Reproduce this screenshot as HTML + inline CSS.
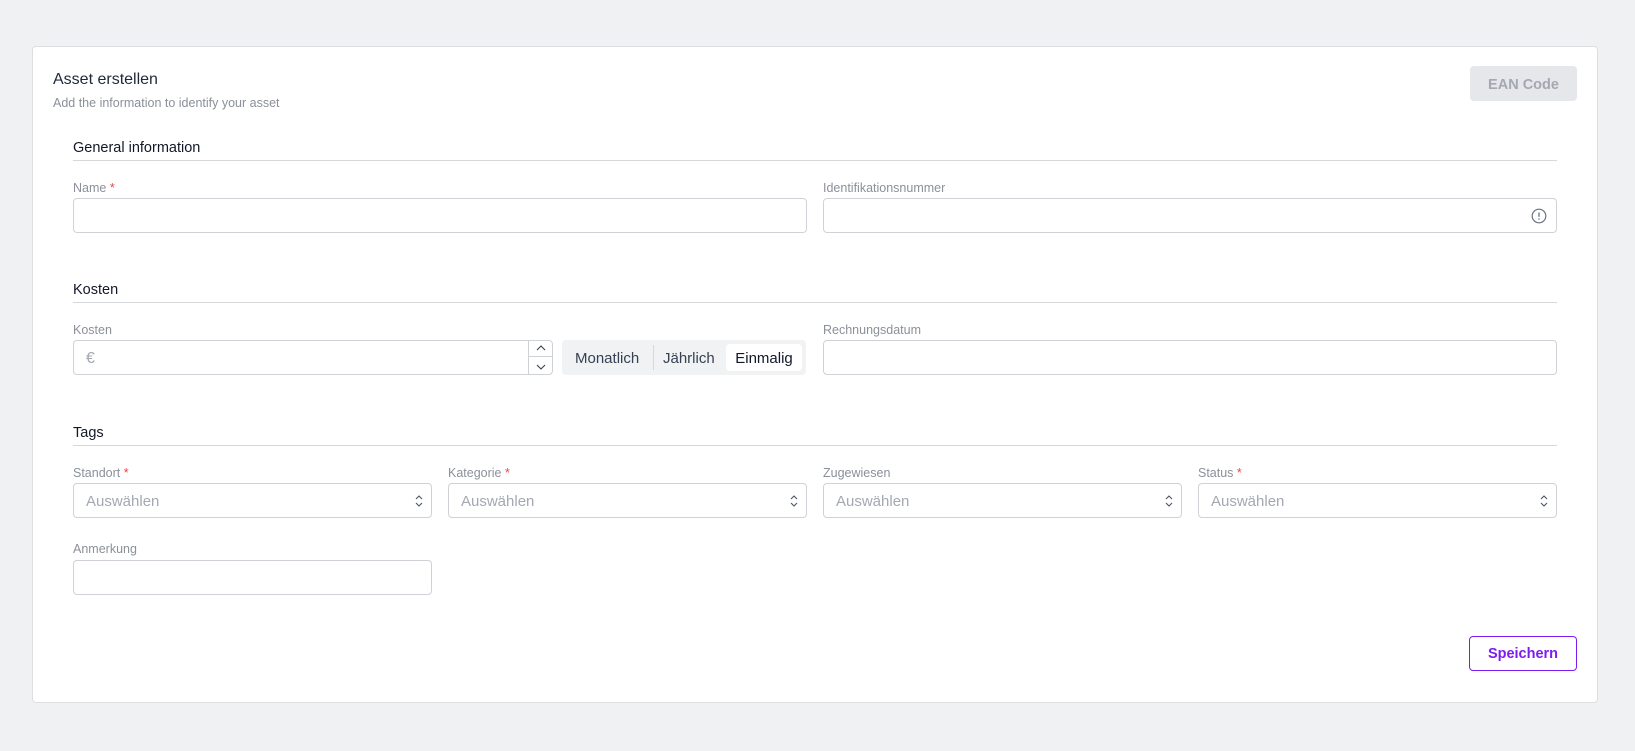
<!DOCTYPE html>
<html><head><meta charset="utf-8"><style>
*{box-sizing:border-box;margin:0;padding:0}
body{width:1635px;height:751px;background:#f0f1f3;font-family:"Liberation Sans",Arial,sans-serif;position:relative;overflow:hidden;color:#111827}
.card{position:absolute;left:32px;top:46px;width:1566px;height:657px;background:#fff;border:1px solid #dcdee2;border-radius:4px}
.a{position:absolute}
.t{left:53px;top:71px;font-size:16px;color:#1f2937}
.st{left:53px;top:96px;font-size:12.5px;color:#8b9099}
.ean{left:1470px;top:66px;width:107px;height:35px;background:#e5e7eb;border-radius:4px;color:#a3a8b1;font-weight:bold;font-size:14.5px;text-align:center;line-height:38px}
.sec{left:73px;font-size:14.5px;color:#111827}
.line{left:73px;width:1484px;height:1px;background:#d6d8dc}
.lab{font-size:12.5px;color:#8b9099}
.lab b{color:#ef4444;font-weight:normal}
.in{border:1px solid #cfd2d7;border-radius:4px;height:35px;background:#fff}
.ph{font-size:15px;color:#a3a8b1;line-height:35px;padding-left:12px}
.chev{position:absolute;right:8px;top:10px}
.seg{left:562px;top:340px;width:244px;height:35px;background:#f1f2f4;border-radius:4px;font-size:15px;color:#374151}
.sv{left:1469px;top:636px;width:108px;height:35px;border:1.5px solid #7c1cf0;border-radius:4px;color:#7c1cf0;font-weight:bold;font-size:14.5px;text-align:center;line-height:34px}
</style></head><body>
<div class="card"></div>
<div class="a t">Asset erstellen</div>
<div class="a st">Add the information to identify your asset</div>
<div class="a ean">EAN Code</div>

<div class="a sec" style="top:140px">General information</div>
<div class="a line" style="top:160px"></div>
<div class="a lab" style="left:73px;top:181px">Name <b>*</b></div>
<div class="a in" style="left:73px;top:198px;width:734px"></div>
<div class="a lab" style="left:823px;top:181px">Identifikationsnummer</div>
<div class="a in" style="left:823px;top:198px;width:734px">
<svg class="chev" style="top:9px;right:9px" width="16" height="16" viewBox="0 0 16 16"><circle cx="8" cy="8" r="6.8" fill="none" stroke="#6b7280" stroke-width="1.2"/><path d="M8 4.5v4.3" stroke="#6b7280" stroke-width="1.3"/><circle cx="8" cy="11" r=".8" fill="#6b7280"/></svg></div>

<div class="a sec" style="top:282px">Kosten</div>
<div class="a line" style="top:302px"></div>
<div class="a lab" style="left:73px;top:323px">Kosten</div>
<div class="a in" style="left:73px;top:340px;width:480px"><div class="ph" style="font-size:16px">€</div>
<div class="a" style="right:0;top:0;width:24px;height:33px;border-left:1px solid #cfd2d7">
<div style="height:16px;border-bottom:1px solid #cfd2d7"></div>
<svg class="a" style="left:7px;top:4px" width="10" height="7" viewBox="0 0 10 7"><path d="M1 5l4-4 4 4" fill="none" stroke="#374151" stroke-width="1.1"/></svg>
<svg class="a" style="left:7px;top:22px" width="10" height="7" viewBox="0 0 10 7"><path d="M1 2l4 4 4-4" fill="none" stroke="#374151" stroke-width="1.1"/></svg>
</div></div>
<div class="a seg">
<div class="a" style="left:13px;top:10px">Monatlich</div>
<div class="a" style="left:91px;top:5px;width:1px;height:25px;background:#d6d8dc"></div>
<div class="a" style="left:101px;top:10px">Jährlich</div>
<div class="a" style="left:164px;top:4px;width:76px;height:27px;background:#fff;border-radius:4px;color:#111827;text-align:center;line-height:29px">Einmalig</div>
</div>
<div class="a lab" style="left:823px;top:323px">Rechnungsdatum</div>
<div class="a in" style="left:823px;top:340px;width:734px"></div>

<div class="a sec" style="top:425px">Tags</div>
<div class="a line" style="top:445px"></div>
<div class="a lab" style="left:73px;top:466px">Standort <b>*</b></div>
<div class="a lab" style="left:448px;top:466px">Kategorie <b>*</b></div>
<div class="a lab" style="left:823px;top:466px">Zugewiesen</div>
<div class="a lab" style="left:1198px;top:466px">Status <b>*</b></div>
<div class="a in" style="left:73px;top:483px;width:359px"><div class="ph">Auswählen</div><svg class="chev" width="8" height="14" viewBox="0 0 8 14"><path d="M1 5l3-3 3 3M1 9l3 3 3-3" fill="none" stroke="#4b5563" stroke-width="1.1"/></svg></div>
<div class="a in" style="left:448px;top:483px;width:359px"><div class="ph">Auswählen</div><svg class="chev" width="8" height="14" viewBox="0 0 8 14"><path d="M1 5l3-3 3 3M1 9l3 3 3-3" fill="none" stroke="#4b5563" stroke-width="1.1"/></svg></div>
<div class="a in" style="left:823px;top:483px;width:359px"><div class="ph">Auswählen</div><svg class="chev" width="8" height="14" viewBox="0 0 8 14"><path d="M1 5l3-3 3 3M1 9l3 3 3-3" fill="none" stroke="#4b5563" stroke-width="1.1"/></svg></div>
<div class="a in" style="left:1198px;top:483px;width:359px"><div class="ph">Auswählen</div><svg class="chev" width="8" height="14" viewBox="0 0 8 14"><path d="M1 5l3-3 3 3M1 9l3 3 3-3" fill="none" stroke="#4b5563" stroke-width="1.1"/></svg></div>

<div class="a lab" style="left:73px;top:542px">Anmerkung</div>
<div class="a in" style="left:73px;top:560px;width:359px"></div>

<div class="a sv">Speichern</div>
</body></html>
